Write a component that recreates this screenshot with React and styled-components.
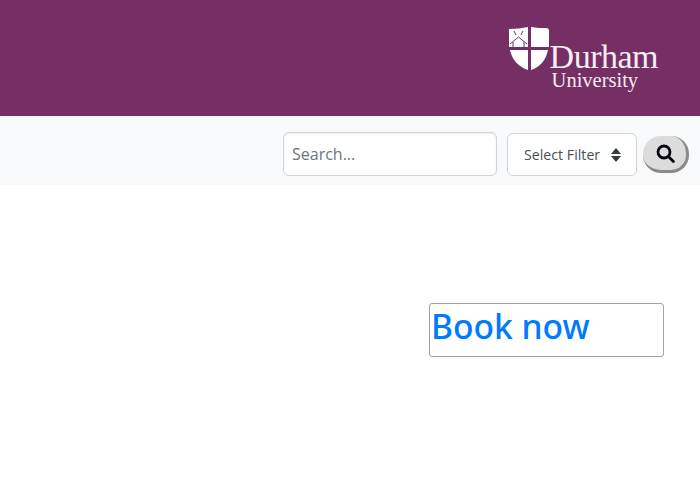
import React from "react";
import styled, { createGlobalStyle } from "styled-components";

const GlobalStyle = createGlobalStyle`
  html, body {
    margin: 0;
    padding: 0;
    background: #fff;
    font-family: "Open Sans", "Noto Sans", sans-serif;
  }
  * {
    box-sizing: border-box;
  }
`;

const Header = styled.header`
  height: 116px;
  background: #752f65;
  display: flex;
  justify-content: flex-end;
  align-items: flex-start;
  padding: 27px 42px 0 0;
`;

const Logo = styled.div`
  display: flex;
  align-items: flex-start;
  gap: 1px;
  color: #f6eef4;
  font-family: "Liberation Serif", serif;
`;

const LogoWords = styled.div`
  display: flex;
  flex-direction: column;
  padding-top: 17px;
`;

const LogoName = styled.span`
  font-size: 34px;
  line-height: 26px;
  letter-spacing: -0.5px;
`;

const LogoSub = styled.span`
  font-size: 20.5px;
  line-height: 20px;
  margin-left: 2px;
`;

const Toolbar = styled.nav`
  height: 69px;
  background: #f8f9fa;
  display: flex;
  justify-content: flex-end;
  align-items: flex-start;
  padding: 16px 11px 0 0;
`;

const SearchInput = styled.input`
  width: 214px;
  height: 44px;
  padding: 0 8px;
  border: 1px solid #ced4da;
  border-radius: 6px;
  background: #fff;
  box-shadow: inset 0 1px 2px rgba(0, 0, 0, 0.08);
  font-family: inherit;
  font-size: 16px;
  color: #495057;
  &::placeholder {
    color: #6c757d;
    opacity: 1;
  }
`;

const FilterBox = styled.div`
  width: 130px;
  height: 43px;
  margin: 1px 0 0 10px;
  padding: 0 15px 0 16px;
  border: 1px solid #ced4da;
  border-radius: 6px;
  background: #fff;
  display: flex;
  justify-content: space-between;
  align-items: center;
  font-size: 14.2px;
  color: #495057;
`;

const SearchButton = styled.button`
  width: 46px;
  height: 37px;
  margin: 4px 0 0 6px;
  padding: 0 0 0 1px;
  border: none;
  border-right: 3px solid #8a8a8a;
  border-bottom: 3px solid #8a8a8a;
  border-radius: 18px;
  background: #dcdcdc;
  color: #000;
  display: flex;
  justify-content: center;
  align-items: center;
`;

const Main = styled.main`
  display: flex;
  justify-content: flex-end;
  padding: 118px 36px 0 0;
`;

const BookBox = styled.div`
  width: 235px;
  height: 54px;
  border: 1px solid #a3a3a3;
  border-radius: 3px;
  padding: 0 0 6px 1px;
  display: flex;
  align-items: center;
`;

const BookLink = styled.a`
  color: #007bff;
  font-family: "Noto Sans", sans-serif;
  font-size: 33.6px;
  font-weight: 500;
  line-height: 1;
  text-decoration: none;
`;

const Crest = () => (
  <svg width="40" height="44" viewBox="0 0 40 44" fill="#fff">
    <path d="M0 2 C7 2 13 1 19 0 V20 H0 Z" />
    <path d="M22 0 C27 1 33 1 37 1 Q40 1 40 4 V20 H22 Z" />
    <path d="M1 23 H19 V43 C10 40 3 33 1 23 Z" />
    <path d="M22 23 H39 C37 33 31 40 22 43 Z" />
    <path d="M1 17 L9.5 10 L18 17 M4 15 V20 M15 15 V20 M5 4 L7 8 M14 4 L12 8" stroke="#752f65" strokeWidth="1" fill="none" />
  </svg>
);

const SortIcon = () => (
  <svg width="10" height="14" viewBox="0 0 10 14" fill="#343a40">
    <path d="M5 0 L10 6 H0 Z" />
    <path d="M0 8 H10 L5 14 Z" />
  </svg>
);

const SearchIcon = () => (
  <svg width="19" height="19" viewBox="0 0 19 19" fill="none" stroke="#04040f" strokeWidth="2.8" strokeLinecap="round">
    <circle cx="8" cy="8" r="6" />
    <path d="M12.4 12.4 L17.4 17.4" />
  </svg>
);

const App = () => (
  <>
    <GlobalStyle />
    <Header>
      <Logo>
        <Crest />
        <LogoWords>
          <LogoName>Durham</LogoName>
          <LogoSub>University</LogoSub>
        </LogoWords>
      </Logo>
    </Header>
    <Toolbar>
      <SearchInput placeholder="Search..." />
      <FilterBox>
        Select Filter
        <SortIcon />
      </FilterBox>
      <SearchButton>
        <SearchIcon />
      </SearchButton>
    </Toolbar>
    <Main>
      <BookBox>
        <BookLink href="#">Book now</BookLink>
      </BookBox>
    </Main>
  </>
);

export default App;
